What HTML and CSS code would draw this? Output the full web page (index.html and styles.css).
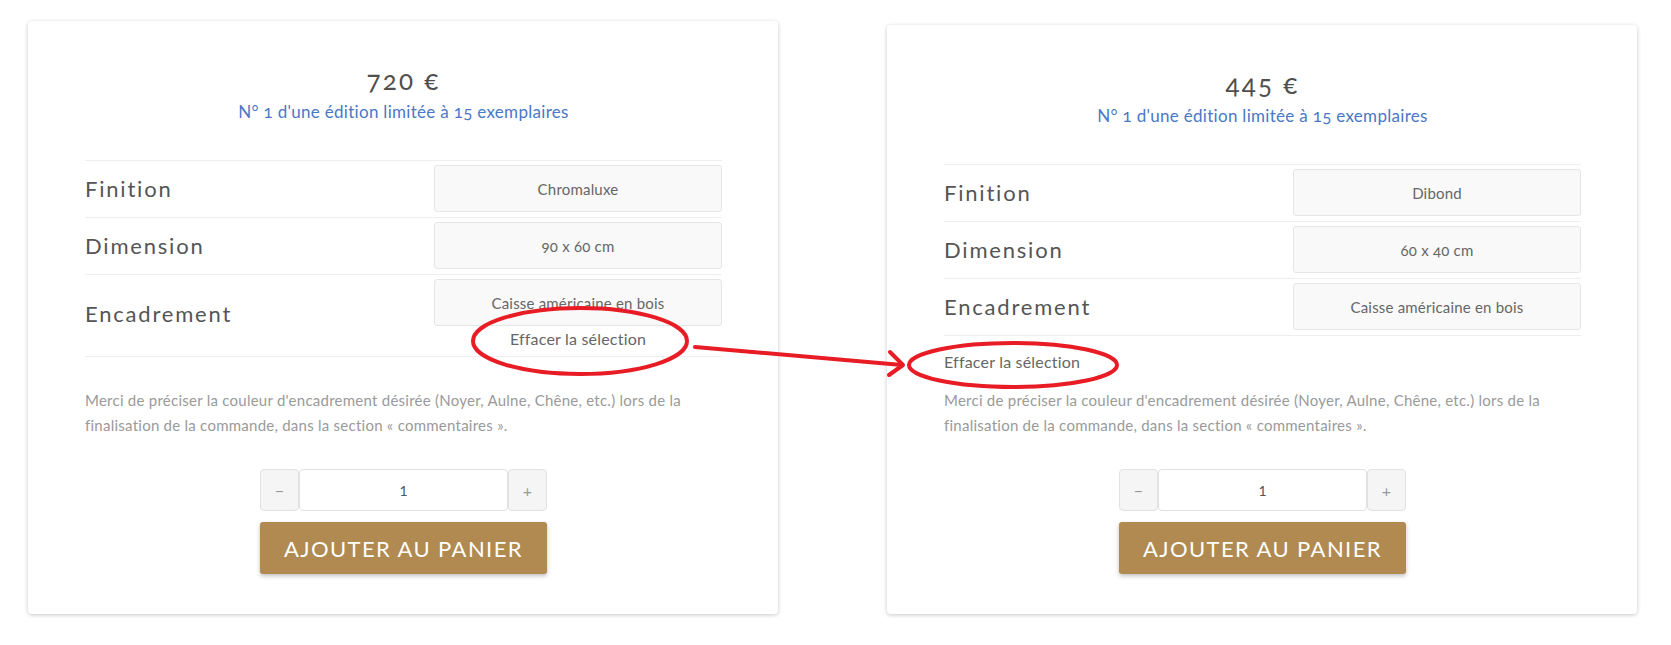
FILE: index.html
```html
<!DOCTYPE html>
<html lang="fr">
<head>
<meta charset="utf-8">
<title>Produit</title>
<link rel="stylesheet" href="styles.css">
</head>
<body>
<div class="page">
  <div class="card">
    <div class="price">720 €</div>
    <div class="edition">N° 1 d'une édition limitée à 15 exemplaires</div>
    <div class="variations">
      <div class="row">
        <div class="label">Finition</div>
        <div class="value"><div class="box">Chromaluxe</div></div>
      </div>
      <div class="row">
        <div class="label">Dimension</div>
        <div class="value"><div class="box">90 x 60 cm</div></div>
      </div>
      <div class="row row-last">
        <div class="label">Encadrement</div>
        <div class="value">
          <div class="box">Caisse américaine en bois</div>
          <div class="reset reset-in">Effacer la sélection</div>
        </div>
      </div>
    </div>
    <p class="note note-a">Merci de préciser la couleur d'encadrement désirée (Noyer, Aulne, Chêne, etc.) lors de la finalisation de la commande, dans la section « commentaires ».</p>
    <div class="qty">
      <div class="qbtn">−</div>
      <div class="qinput">1</div>
      <div class="qbtn">+</div>
    </div>
    <div class="cart">AJOUTER AU PANIER</div>
  </div>

  <div class="card card-b">
    <div class="price">445 €</div>
    <div class="edition">N° 1 d'une édition limitée à 15 exemplaires</div>
    <div class="variations">
      <div class="row">
        <div class="label">Finition</div>
        <div class="value"><div class="box">Dibond</div></div>
      </div>
      <div class="row">
        <div class="label">Dimension</div>
        <div class="value"><div class="box">60 x 40 cm</div></div>
      </div>
      <div class="row">
        <div class="label">Encadrement</div>
        <div class="value"><div class="box">Caisse américaine en bois</div></div>
      </div>
    </div>
    <div class="reset reset-out">Effacer la sélection</div>
    <p class="note note-b">Merci de préciser la couleur d'encadrement désirée (Noyer, Aulne, Chêne, etc.) lors de la finalisation de la commande, dans la section « commentaires ».</p>
    <div class="qty">
      <div class="qbtn">−</div>
      <div class="qinput">1</div>
      <div class="qbtn">+</div>
    </div>
    <div class="cart">AJOUTER AU PANIER</div>
  </div>
</div>

<svg class="marks" width="1671" height="645" viewBox="0 0 1671 645" xmlns="http://www.w3.org/2000/svg">
  <ellipse cx="580" cy="341" rx="107" ry="33" fill="none" stroke="#e81c24" stroke-width="4"/>
  <path d="M695 347 L902 365" fill="none" stroke="#e81c24" stroke-width="4" stroke-linecap="round"/>
  <path d="M890 352 L903 365 L889 375" fill="none" stroke="#e81c24" stroke-width="4" stroke-linecap="round" stroke-linejoin="round"/>
  <ellipse cx="1013" cy="365" rx="104" ry="22" fill="none" stroke="#e81c24" stroke-width="4"/>
</svg>
</body>
</html>
```

FILE: styles.css
```css
* { box-sizing: border-box; }

html, body {
  margin: 0;
  padding: 0;
  background: #ffffff;
}

body {
  font-family: "Lato", "Open Sans", sans-serif;
  color: #555;
  width: 1671px;
  height: 645px;
  overflow: hidden;
  position: relative;
}

.page {
  display: flex;
  align-items: flex-start;
  gap: 109px;
  padding: 21px 0 0 28px;
}

.card {
  width: 750px;
  background: #fff;
  border-radius: 4px;
  box-shadow: 0 1px 4px rgba(0, 0, 0, 0.22);
  padding: 43px 56px 40px 57px;
  display: flex;
  flex-direction: column;
}

.card-b {
  margin-top: 4px;
}

.price {
  text-align: center;
  font-size: 26px;
  line-height: 32px;
  letter-spacing: 2.2px;
  color: #4f4f4f;
  font-weight: 400;
  font-variant-numeric: oldstyle-nums;
}

.edition {
  text-align: center;
  margin-top: 5px;
  font-size: 17px;
  line-height: 21px;
  color: #4a78c6;
  letter-spacing: 0.3px;
  font-variant-numeric: oldstyle-nums;
}

.variations {
  margin-top: 38px;
  border-bottom: 1px solid #eeeeee;
}

.row {
  display: grid;
  grid-template-columns: 349px 1fr;
  align-items: center;
  border-top: 1px solid #eeeeee;
  padding: 4px 0 5px;
}

.row-last {
  padding-bottom: 8px;
}

.label {
  font-size: 22px;
  letter-spacing: 1.8px;
  color: #555;
}

.value {
  display: flex;
  flex-direction: column;
  align-items: stretch;
}

.box {
  height: 47px;
  border: 1px solid #e6e6e6;
  border-radius: 3px;
  background: #f9f9f9;
  display: flex;
  align-items: center;
  justify-content: center;
  font-size: 15px;
  color: #666;
  letter-spacing: 0.2px;
  font-variant-numeric: oldstyle-nums;
}

.reset {
  font-size: 16px;
  line-height: 18px;
  color: #666;
  letter-spacing: 0.2px;
}

.reset-in {
  text-align: center;
  margin-top: 4px;
}

.reset-out {
  margin-top: 17px;
}

.note {
  margin: 31px 0 0;
  font-size: 15px;
  line-height: 25px;
  color: #9a9a9a;
  letter-spacing: 0.25px;
}

.note-b {
  margin-top: 17px;
}

.qty {
  display: flex;
  justify-content: center;
  margin-top: 31px;
  height: 42px;
}

.qbtn {
  width: 39px;
  background: #f5f5f5;
  border: 1px solid #e2e2e2;
  border-radius: 4px;
  display: flex;
  align-items: center;
  justify-content: center;
  color: #999;
  font-size: 16px;
}

.qinput {
  width: 209px;
  background: #fff;
  border: 1px solid #e2e2e2;
  border-radius: 4px;
  display: flex;
  align-items: center;
  justify-content: center;
  font-size: 14px;
  color: #555;
}

.cart {
  align-self: center;
  margin-top: 11px;
  width: 287px;
  height: 52px;
  background: #b08a50;
  color: #fff;
  border-radius: 3px;
  box-shadow: 0 2px 4px rgba(0, 0, 0, 0.25);
  display: flex;
  align-items: center;
  justify-content: center;
  font-size: 22px;
  letter-spacing: 1.4px;
}

.marks {
  position: absolute;
  left: 0;
  top: 0;
  pointer-events: none;
}
```
